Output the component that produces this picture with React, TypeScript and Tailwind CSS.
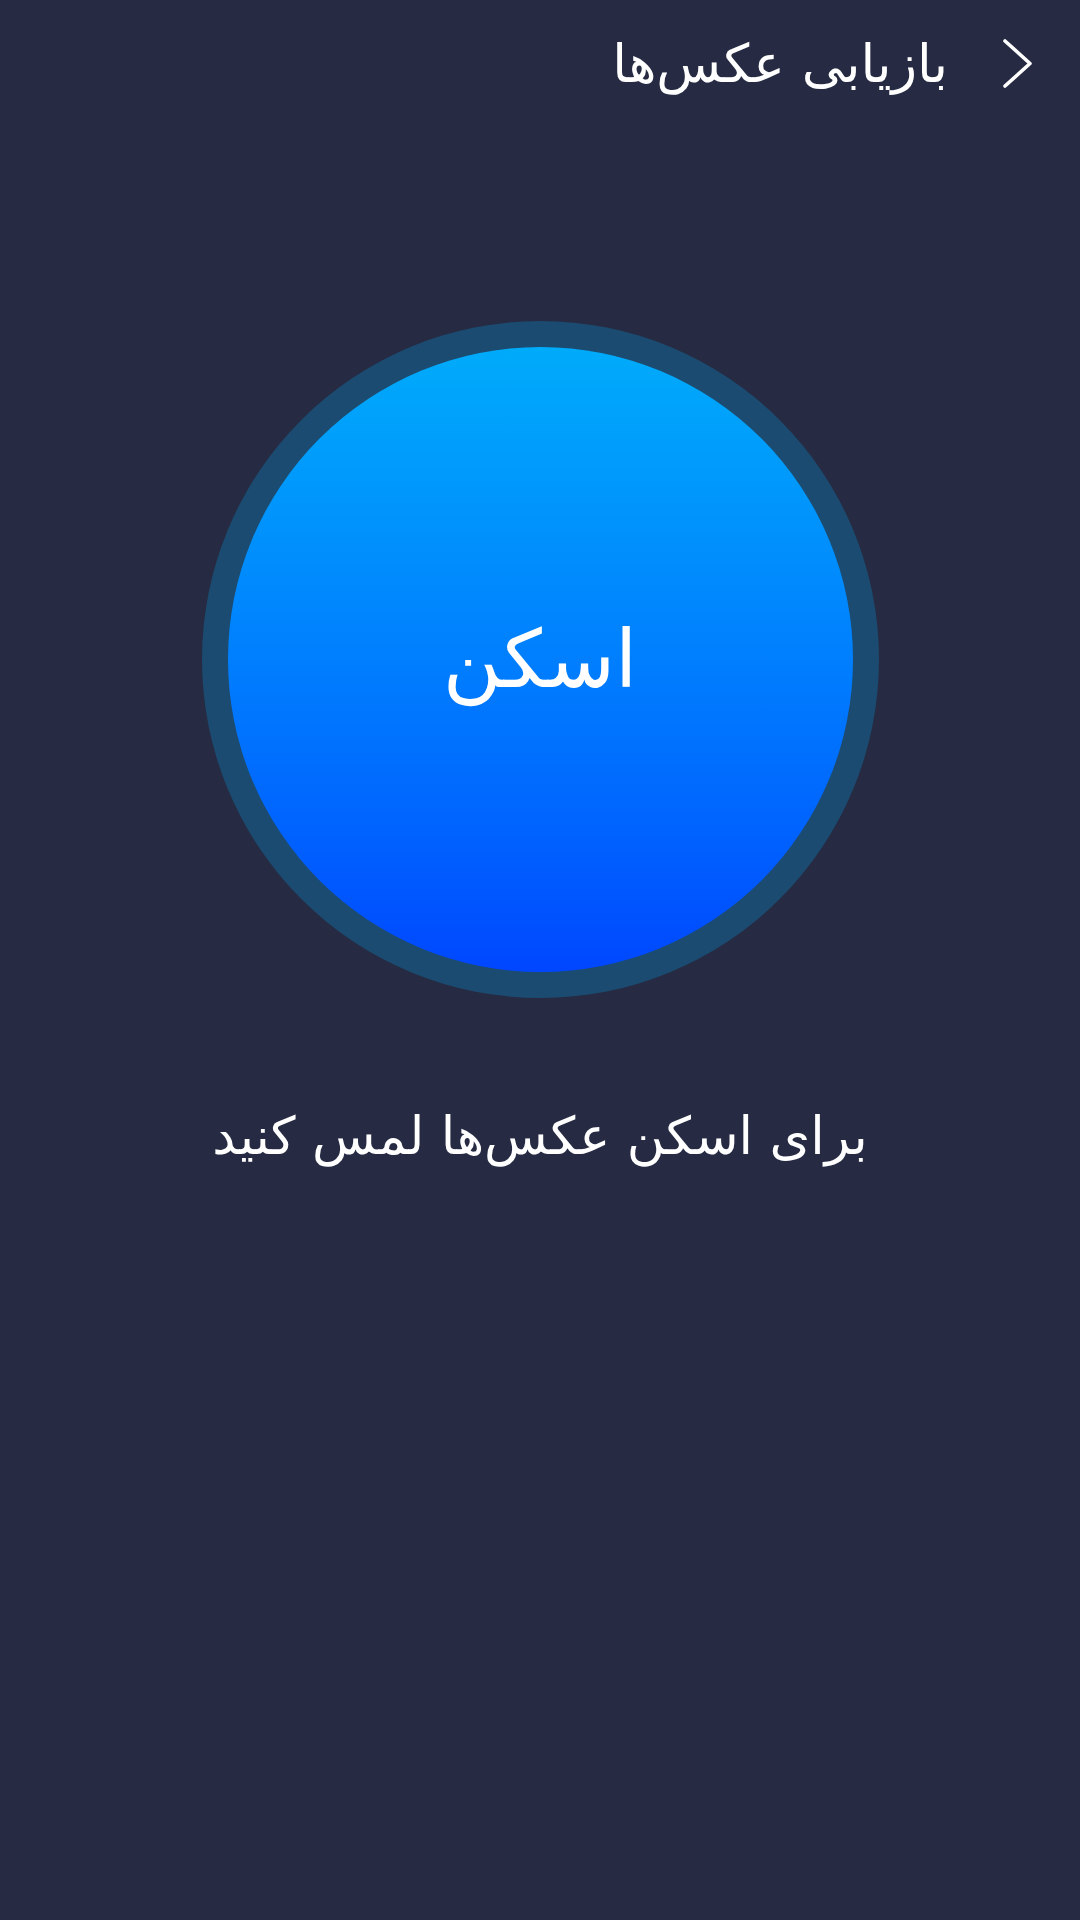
const font = { fontFamily: '"DejaVu Sans", "Noto Sans", sans-serif' };

function BackChevron() {
  return (
    <svg width="31" height="51" viewBox="0 0 31 51" fill="none" aria-hidden>
      <polyline points="3,3 28,25.5 3,48" stroke="white" strokeWidth="3.6" strokeLinecap="round" strokeLinejoin="round" />
    </svg>
  );
}

export default function App() {
  return (
    <div dir="rtl" className="flex min-h-[1920px] w-[1080px] flex-col items-center bg-[#262b43] text-white" style={font}>
      <header className="flex h-[126px] w-full items-center gap-[54px] pr-[47px]">
        <BackChevron />
        <h1 className="text-[53px] leading-none">بازیابی عکس‌ها</h1>
      </header>

      <button className="mt-[195px] flex size-[677px] items-center justify-center rounded-full bg-[#1b4b70] p-[26px]">
        <span className="flex size-full items-center justify-center rounded-full bg-gradient-to-b from-[#00abfa] to-[#0046ff] text-[80px] text-white">
          اسکن
        </span>
      </button>

      <p className="mt-[112px] text-[52px] leading-none">برای اسکن عکس‌ها لمس کنید</p>
    </div>
  );
}
